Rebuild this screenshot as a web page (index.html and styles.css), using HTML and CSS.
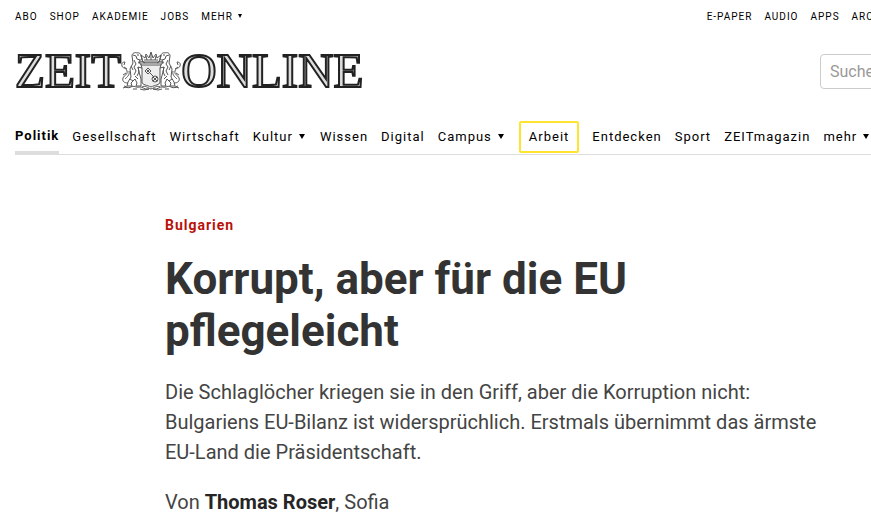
FILE: index.html
```html
<!DOCTYPE html>
<html lang="de">
<head>
  <meta charset="UTF-8">
  <title>Korrupt, aber für die EU pflegeleicht | ZEIT ONLINE</title>
  <meta name="viewport" content="width=device-width, initial-scale=1.0">
  <link rel="stylesheet" href="styles.css">
</head>
<body>
<div class="page">

  <header class="header">
    <div class="topbar">
      <nav class="topnav">
        <a href="#">ABO</a>
        <a href="#">SHOP</a>
        <a href="#">AKADEMIE</a>
        <a href="#">JOBS</a>
        <a href="#" class="more">MEHR</a>
      </nav>
      <nav class="topnav">
        <a href="#">E-PAPER</a>
        <a href="#">AUDIO</a>
        <a href="#">APPS</a>
        <a href="#">ARCHIV</a>
      </nav>
    </div>

    <div class="masthead">
      <a class="logo" href="#">
        <span>ZEIT</span>
        <svg class="crest" viewBox="0 0 60 40" aria-hidden="true">
          <defs>
            <!-- left lion, mirrored for the right side -->
            <g id="lion">
              <path d="M11 5c0-3 3-4 5-3 2-1 4 1 4 3l1 3-3 2 1 3 3 2-1 2-4-1 1 5 2 7v7h-5l1-3-2-4-4 4 1 3H6l1-4 3-5-1-8 3-6z"/>
              <path d="M12 4l3 1 1 3 3 1M13 9l2 4-2 3 2 4-2 4M10 15l2 4M17 16l1 5-2 4M14 25l3 3M9 28l3 2M16 4h2M17 12l4-2 3 2"/>
              <path d="M7 32c-4 0-6-2-5-5s5-3 4-7-4-2-5-5 1-4 3-4l-1 3M4 28c2-2 5-4 4-8M3 16l3 2M2 24l3-2"/>
              <path d="M2 37c3-2 5 1 8-1s5 1 8 0 5 3 10 2M3 35l3 1M12 38l4 0M19 38l4 1 5-1"/>
            </g>
          </defs>
          <use href="#lion"/>
          <use href="#lion" transform="matrix(-1 0 0 1 60 0)"/>
          <path class="shield" d="M20 14h20l-1 3v14c0 3-5 3-9 5-4-2-9-2-9-5V17z"/>
          <path d="M19 12h22M21 36c3-2 6 1 9 2 3-1 6-4 9-2"/>
          <path d="M22 11l-2-7 4 3 1-4 3 4 2-6 2 6 3-4 1 4 4-3-2 7zM23 9h14M25 5l1 4M30 3v6M35 5l-1 4"/>
          <!-- key -->
          <path d="M27 17l3 3-3 3-3-3zM25 18l4 4M29 18l-4 4M29 22l4 4"/>
          <circle cx="34" cy="28" r="3"/>
          <path d="M32 26l4 4M32 30l4-4"/>
        </svg>
        <span>ONLINE</span>
      </a>
      <form class="search" role="search">
        <input type="search" placeholder="Suche" aria-label="Suche">
      </form>
    </div>

    <nav class="mainnav">
      <a href="#" class="active">Politik</a>
      <a href="#">Gesellschaft</a>
      <a href="#">Wirtschaft</a>
      <a href="#" class="more">Kultur</a>
      <a href="#">Wissen</a>
      <a href="#">Digital</a>
      <a href="#" class="more">Campus</a>
      <a href="#" class="boxed">Arbeit</a>
      <a href="#">Entdecken</a>
      <a href="#">Sport</a>
      <a href="#">ZEITmagazin</a>
      <a href="#" class="more">mehr</a>
    </nav>
  </header>

  <main class="article">
    <div class="kicker">Bulgarien</div>
    <h1>Korrupt, aber für die EU pflegeleicht</h1>
    <p class="summary">Die Schlaglöcher kriegen sie in den Griff, aber die Korruption nicht: Bulgariens EU-Bilanz ist widersprüchlich. Erstmals übernimmt das ärmste EU-Land die Präsidentschaft.</p>
    <p class="byline">Von <a href="#">Thomas Roser</a>, Sofia</p>
  </main>

</div>
</body>
</html>
```
FILE: styles.css
```css
* {
  box-sizing: border-box;
}

body {
  margin: 0;
  background: #fff;
  color: #444;
  font-family: Roboto, "Liberation Sans", sans-serif;
  overflow-x: hidden;
}

a {
  color: inherit;
  text-decoration: none;
}

.page {
  min-width: 908px;
  padding: 0 15px 16px;
}

.header {
  color: #000;
}

.topbar {
  display: flex;
  justify-content: space-between;
  line-height: 34px;
}

.topnav {
  display: flex;
  gap: 12px;
  font-size: 10px;
  letter-spacing: 1px;
}

.more::after {
  content: "";
  display: inline-block;
  margin: 0 2px 0 6px;
  vertical-align: 2px;
  border: 3px solid transparent;
  border-top: 5px solid #000;
  border-bottom: 0;
}

.topnav .more::after {
  margin-left: 5px;
  border-width: 4px 2px 0;
}

.masthead {
  display: flex;
  justify-content: space-between;
  align-items: center;
  height: 48px;
  margin-top: 13px;
}

.logo {
  display: flex;
  align-items: center;
  font-family: "Liberation Serif", serif;
  font-size: 49px;
  line-height: 48px;
  color: #ddd;
  -webkit-text-stroke: 2px #222;
}

.crest {
  width: 60px;
  height: 40px;
  fill: none;
  stroke: #555;
  stroke-width: 1;
}

.crest .shield {
  fill: #eee;
}

.search input {
  width: 73px;
  height: 35px;
  padding: 0 0 0 9px;
  border: 1px solid #ccc;
  border-radius: 4px;
  background: #fff;
  font-family: inherit;
  font-size: 16px;
  appearance: none;
}

.search input::placeholder {
  color: #999;
}

.mainnav {
  display: flex;
  align-items: center;
  gap: 13px;
  height: 36px;
  margin: 24px -15px 0 0;
  border-bottom: 1px solid #ddd;
  font-size: 13px;
  letter-spacing: 1px;
  white-space: nowrap;
}

.mainnav a {
  line-height: 31px;
}

.mainnav .active {
  align-self: flex-end;
  line-height: 30px;
  border-bottom: 3px solid #ddd;
  font-weight: bold;
}

.mainnav .boxed {
  padding: 0 8px;
  border: 2px solid #ffe32e;
  border-radius: 2px;
  line-height: 28px;
}

.article {
  max-width: 680px;
  margin-left: 150px;
  padding-top: 60px;
}

.kicker {
  color: #b91109;
  font-size: 14px;
  font-weight: bold;
  line-height: 20px;
  letter-spacing: 1px;
}

h1 {
  max-width: 560px;
  margin: 18px 0 0;
  color: #333;
  font-size: 44px;
  line-height: 52px;
}

.summary,
.byline {
  margin: 20px 0 0;
  font-size: 20px;
  line-height: 30px;
}

.byline a {
  color: #252525;
  font-weight: bold;
}
```
